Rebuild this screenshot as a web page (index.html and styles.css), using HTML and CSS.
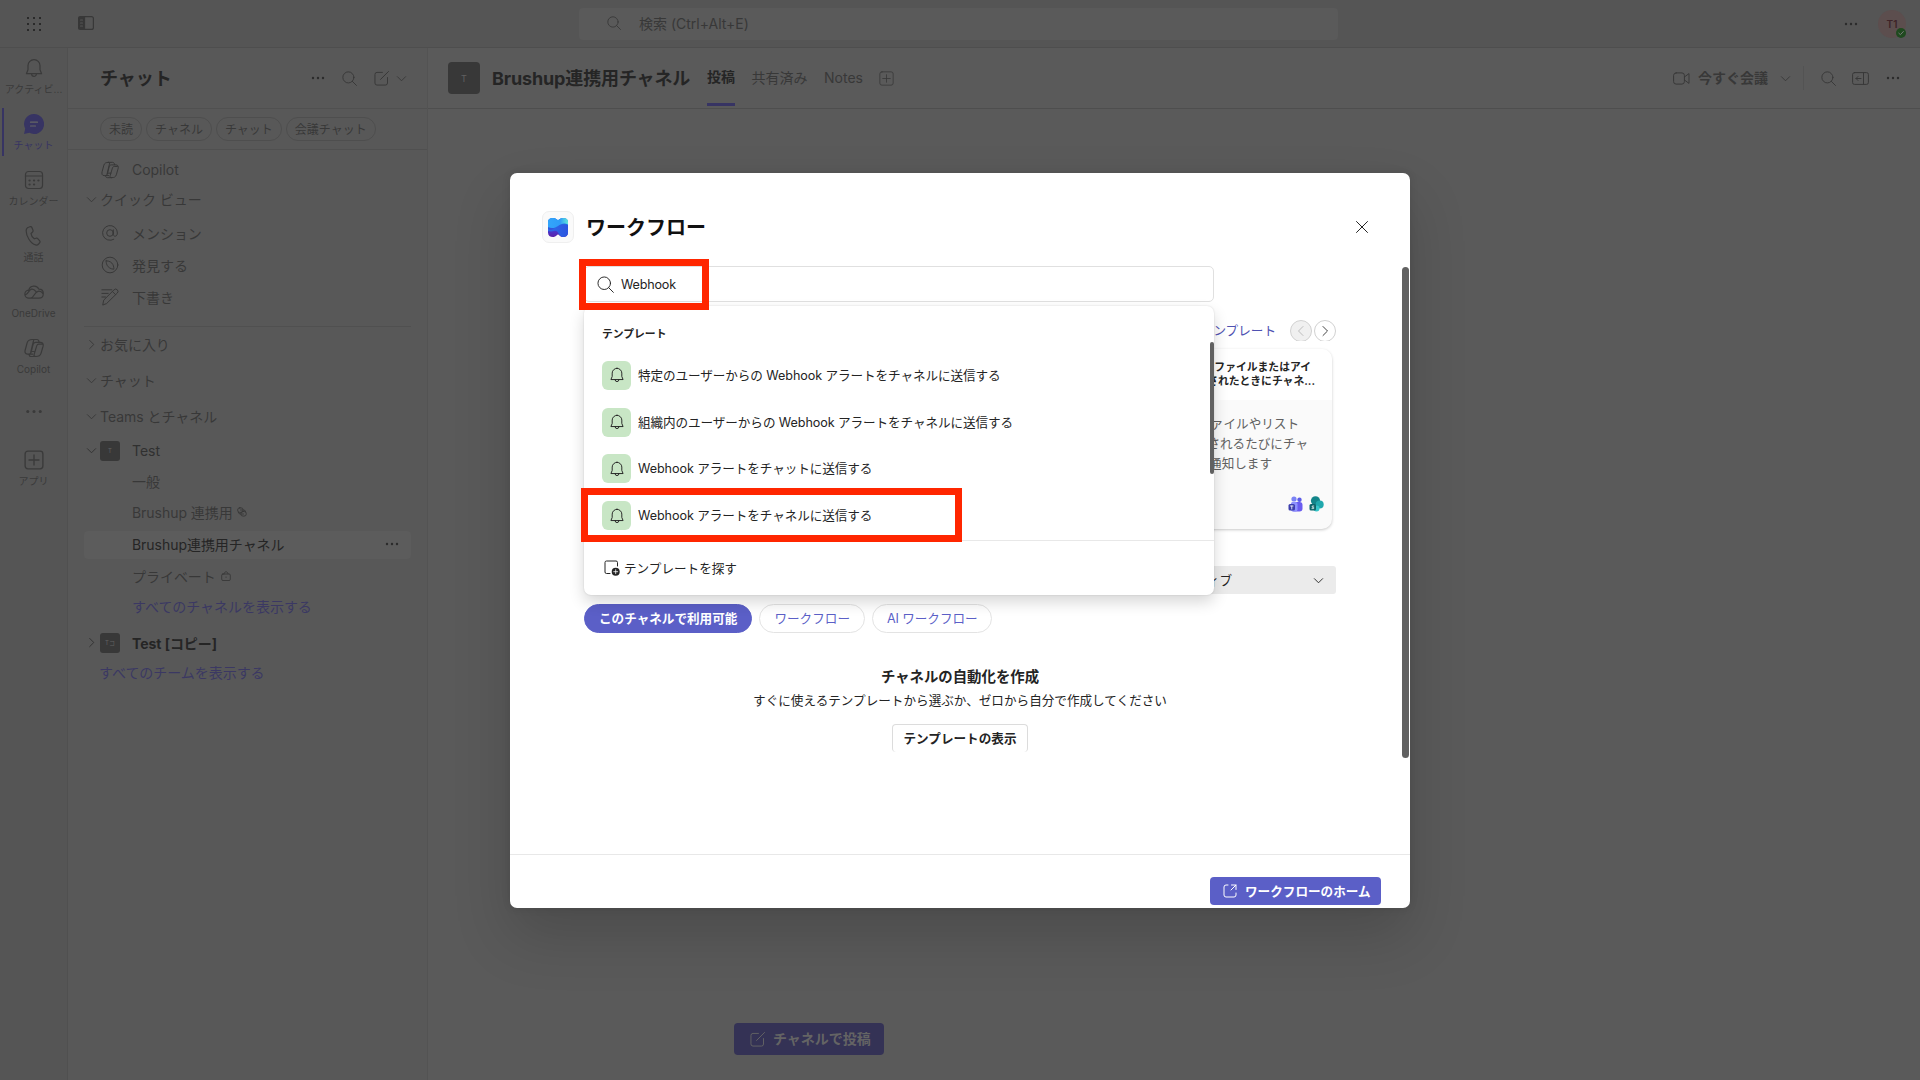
FILE: index.html
```
<!DOCTYPE html>
<html lang="ja">
<head>
    <meta charset="UTF-8">
    <meta name="viewport" content="width=device-width, initial-scale=1.0">
    <title>Brushup連携用チャネル | ワークフロー</title>
    <link rel="stylesheet" href="styles.css">
</head>
<body>
    <!-- 共通アイコン -->
    <svg class="sprite">
        <symbol id="bell" viewBox="0 0 20 20"><path d="M10 1.6a6 6 0 0 0-6 6v4.2L2.4 15.7h15.2L16 11.8V7.6a6 6 0 0 0-6-6zM7.6 15.9a2.4 2.4 0 0 0 4.8 0"/></symbol>
        <symbol id="search" viewBox="0 0 16 16"><circle cx="6.8" cy="6.8" r="5.9"/><path d="M11 11l4.400 4.400"/></symbol>
        <symbol id="down" viewBox="0 0 12 12"><path d="M1.5 4L6 8.5 10.5 4"/></symbol>
        <symbol id="right" viewBox="0 0 12 12"><path d="M4 1.5L8.5 6 4 10.5"/></symbol>
        <symbol id="dots" viewBox="0 0 14 4"><g fill="currentColor" stroke="none"><circle cx="2" cy="2" r="1.2"/><circle cx="7" cy="2" r="1.2"/><circle cx="12" cy="2" r="1.2"/></g></symbol>
        <symbol id="compose" viewBox="0 0 16 16"><path d="M9 1.5H3.2A2.2 2.2 0 0 0 1 3.700v9A2.200 2.200 0 0 0 3.200 15h9a2.200 2.200 0 0 0 2.200-2.200V7M7 9l8.500-8.500"/></symbol>
        <symbol id="copilot" viewBox="0 0 20 20"><path d="M8.200 1.500H13c1.300 0 1.800 1 2.200 2.800H11.500C10 4.300 9.500 5 9 6.700L7 14.500c-.4 1.300-1 1.700-2 1.700H3.500C1 16.200.7 14 1.200 12L3.200 4.600C3.900 2.300 5.500 1.500 8.200 1.500zM11.800 18.500H7c-1.300 0-1.800-1-2.200-2.300h3.700M15.200 4.300h1.500c2.500 0 2.800 2.200 2.300 4.200l-2 6.900c-.7 2.300-2.300 3.100-5.200 3.100-1.500 0-2-.8-1.700-2l2.600-8.700c.4-1.300 1-1.700 2-1.700h3.500M9.700 2l-3 12.500M8 13.500h3"/></symbol>
        <symbol id="plusbox" viewBox="0 0 18 18"><rect x="1" y="1" width="16" height="16" rx="2.500"/><path d="M9 4.500v9M4.500 9h9"/></symbol>
    </svg>

    <div class="app">
        <header class="topbar">
            <svg class="waffle" viewBox="0 0 16 16"><path d="M1 2h14M1 8h14M1 14h14"/></svg>
            <svg class="panel-icon" viewBox="0 0 16 14"><rect x=".6" y=".6" width="14.800" height="12.800" rx="2"/><path d="M1 1h5.500v12H1z" fill="currentColor"/><path d="M2.500 4h2M2.500 7h2M2.500 10h2" stroke="#555"/></svg>
            <div class="global-search">
                <svg class="icon"><use href="#search"/></svg>
                <span>検索 (Ctrl+Alt+E)</span>
            </div>
            <div class="account">
                <svg class="dots"><use href="#dots"/></svg>
                <div class="avatar">T1
                    <svg class="presence" viewBox="0 0 10 10"><circle cx="5" cy="5" r="5"/><path d="M2.800 5.200l1.600 1.500 3-3.200"/></svg>
                </div>
            </div>
        </header>

        <div class="workspace">
            <nav class="rail">
                <a class="rail-item"><svg><use href="#bell"/></svg><span>アクティビ...</span></a>
                <a class="rail-item active"><svg viewBox="0 0 20 20"><path d="M10 0a10 10 0 1 1-4.700 18.800L0 20l1.200-5.300A10 10 0 0 1 10 0z" fill="currentColor" stroke="none"/><path d="M6.500 8.200h7M6.500 12h5" stroke="#666"/></svg><span>チャット</span></a>
                <a class="rail-item"><svg viewBox="0 0 20 20"><rect x="1.500" y="1.500" width="17" height="17" rx="3"/><path d="M1.500 6h17"/><path d="M5.500 10.500h.1M10 10.500h.1M14.400 10.500h.1M5.500 14.500h.1M10 14.500h.1" stroke-width="2.200"/></svg><span>カレンダー</span></a>
                <a class="rail-item"><svg viewBox="0 0 20 20"><path d="M4.500 1.200L6 .7c1-.2 1.700.2 2 1l1 2.500c.3 1 0 1.500-.6 2L7 7.500c.2 1.800 1.700 4.300 3.300 5.300l1.800-.6c.8-.2 1.400 0 1.900.6l1.700 2c.5.7.4 1.500-.1 2l-1 1.200c-.8.900-1.900 1.300-3 .9C6.500 17.500 2 10 2.200 4.500c0-1.600 1-2.900 2.300-3.300z"/></svg><span>通話</span></a>
                <a class="rail-item"><svg viewBox="0 0 20 20"><path d="M5 16.200a4 4 0 0 1-.3-8A5.500 5.500 0 0 1 15 7.200c6 .2 5.500 9 0 9zM1.600 12.800c3-1 3-5 6-5.700 2-.4 3 .7 4.500 2.600M6.500 16c4 0 3.500-6 7.500-6.700 2.300-.4 4 .8 5 2.500"/></svg><span>OneDrive</span></a>
                <a class="rail-item"><svg><use href="#copilot"/></svg><span>Copilot</span></a>
                <a class="rail-item more"><svg viewBox="0 0 14 4"><use href="#dots"/></svg></a>
                <a class="rail-item"><svg viewBox="0 0 18 18"><use href="#plusbox"/></svg><span>アプリ</span></a>
            </nav>

            <aside class="sidebar">
                <div class="sidebar-head">
                    <h2>チャット</h2>
                    <svg class="dots"><use href="#dots"/></svg>
                    <svg class="icon search"><use href="#search"/></svg>
                    <svg class="icon compose"><use href="#compose"/></svg>
                    <svg class="chevron"><use href="#down"/></svg>
                </div>
                <div class="filters">
                    <span>未読</span><span>チャネル</span><span>チャット</span><span>会議チャット</span>
                </div>
                <div class="tree">
                    <div class="row copilot-row"><svg class="row-icon"><use href="#copilot"/></svg>Copilot</div>
                    <div class="row section quick"><svg class="chevron"><use href="#down"/></svg>クイック ビュー</div>
                    <div class="row"><svg class="row-icon" viewBox="0 0 20 20"><circle cx="10" cy="10" r="3.700"/><path d="M13.700 6.500v5c0 3 4.500 3 4.500-1.500a8.200 8.200 0 1 0-4 7"/></svg>メンション</div>
                    <div class="row"><svg class="row-icon" viewBox="0 0 20 20"><circle cx="10" cy="10" r="8.700"/><path d="M5.800 5.300c3.500 0 6.400 2 7.400 4.200s1.200 4 1 5.200c-3.500-.3-6.200-2-7.400-4.400s-1-4-1-5z"/></svg>発見する</div>
                    <div class="row"><svg class="row-icon" viewBox="0 0 20 20"><path d="M1 2h11M1 6h7M1 10h4M2 18.500l1-5L14.500 2a2.500 2.500 0 0 1 3.600 3.600L6.500 17z M12.800 4l3.400 3.400"/></svg>下書き</div>
                    <hr>
                    <div class="row section"><svg class="chevron"><use href="#right"/></svg>お気に入り</div>
                    <div class="row section"><svg class="chevron"><use href="#down"/></svg>チャット</div>
                    <div class="row section"><svg class="chevron"><use href="#down"/></svg>Teams とチャネル</div>
                    <div class="row team"><svg class="chevron"><use href="#down"/></svg><i>T</i>Test</div>
                    <div class="row channel general">一般</div>
                    <div class="row channel">Brushup 連携用<svg class="tag" viewBox="0 0 10 10"><rect x=".6" y=".8" width="5.500" height="4.600" rx="2.200"/><rect x="3.800" y="4.500" width="5.500" height="4.600" rx="2.200"/><path d="M3.500 3h3.200a2 2 0 0 1 2 1.800M6.500 7H3.300a2 2 0 0 1-2-1.600"/></svg></div>
                    <div class="row channel selected">Brushup連携用チャネル<svg class="dots"><use href="#dots"/></svg></div>
                    <div class="row channel">プライベート<svg class="tag lock" viewBox="0 0 10 10"><rect x=".7" y="3" width="8.600" height="6.500" rx="1.200"/><path d="M3 3c0-3 4-3 4-.3M4.900 6.200h.3"/></svg></div>
                    <div class="row channel link">すべてのチャネルを表示する</div>
                    <div class="row team copy"><svg class="chevron"><use href="#right"/></svg><i>Tコ</i><b>Test [コピー]</b></div>
                    <div class="row link all-teams">すべてのチームを表示する</div>
                </div>
            </aside>

            <main class="channel-view">
                <div class="channel-head">
                    <div class="team-tile">T</div>
                    <h1>Brushup連携用チャネル</h1>
                    <div class="tabs">
                        <span class="tab current">投稿</span>
                        <span class="tab">共有済み</span>
                        <span class="tab">Notes</span>
                        <svg class="icon"><use href="#plusbox"/></svg>
                    </div>
                    <div class="channel-actions">
                        <svg class="camera" viewBox="0 0 17 13"><rect x=".6" y=".9" width="10.800" height="11.200" rx="2.500"/><path d="M11.400 5l4.600-3.400v9.800L11.400 8"/></svg>
                        <b>今すぐ会議</b>
                        <svg class="chevron"><use href="#down"/></svg>
                        <span class="bar"></span>
                        <svg class="icon find"><use href="#search"/></svg>
                        <svg class="camera" viewBox="0 0 17 13"><rect x=".6" y=".6" width="15.800" height="11.800" rx="1.800"/><path d="M11.500 1v11M9 6.500H4M6 4.500l-2 2 2 2"/></svg>
                        <svg class="dots"><use href="#dots"/></svg>
                    </div>
                </div>
                <div class="feed">
                    <button class="post"><svg class="icon"><use href="#compose"/></svg><span>チャネルで投稿</span></button>
                </div>
            </main>
        </div>
    </div>

    <div class="modal">
        <div class="modal-head">
            <div class="logo">
                <svg viewBox="0 0 20 19">
                    <defs>
                        <linearGradient id="g1" x1="0" y1="0" x2="0" y2="1"><stop offset=".45" stop-color="#1f6fe8"/><stop offset=".7" stop-color="#4a35c9"/><stop offset="1" stop-color="#5a20a8"/></linearGradient>
                        <linearGradient id="g2" x1="0" y1="0" x2="1" y2="0"><stop offset="0" stop-color="#33a5fb"/><stop offset=".6" stop-color="#2f9df8"/><stop offset="1" stop-color="#5fe8d8"/></linearGradient>
                        <linearGradient id="g3" x1="0" y1="0" x2="1" y2="0"><stop offset="0" stop-color="#2f6be8"/><stop offset="1" stop-color="#2a55e0"/></linearGradient>
                        <clipPath id="shape"><path d="M0 4.500C0 1 2 0 5 0s4 2 5 2 2-2 5-2 5 1 5 4.500v10c0 3-2 4.500-5 4.500s-4-2.500-5-2.500S8 19 5 19s-5-1.500-5-4.500z"/></clipPath>
                    </defs>
                    <g clip-path="url(#shape)">
                        <path d="M0 0h20v19H0z" fill="url(#g1)"/>
                        <path d="M0 11c5 2 6-1 9-3s7-2 11-1v12h-7c-3-3-3-7-7-6-2 .6-4 .6-6 0z" fill="url(#g3)"/>
                        <path d="M0 0h20v6.500c-4-2-7-.5-10 1.500s-6 3-10 1z" fill="url(#g2)"/>
                    </g>
                </svg>
            </div>
            <h2>ワークフロー</h2>
            <svg class="close" viewBox="0 0 12 12"><path d="M.5.5l11 11M11.500.5l-11 11"/></svg>
        </div>

        <div class="modal-body">
            <div class="search-box">
                <svg class="icon"><use href="#search"/></svg>
                <span>Webhook</span>

                <!-- 検索候補 -->
                <div class="suggest">
                    <h3>テンプレート</h3>
                    <div class="option"><i><svg><use href="#bell"/></svg></i><span>特定のユーザーからの Webhook アラートをチャネルに送信する</span></div>
                    <div class="option"><i><svg><use href="#bell"/></svg></i><span>組織内のユーザーからの Webhook アラートをチャネルに送信する</span></div>
                    <div class="option"><i><svg><use href="#bell"/></svg></i><span>Webhook アラートをチャットに送信する</span></div>
                    <div class="option"><i><svg><use href="#bell"/></svg></i><span>Webhook アラートをチャネルに送信する</span></div>
                    <div class="browse">
                        <svg viewBox="0 0 16 16"><path d="M13.500 6V2.500A1.500 1.500 0 0 0 12 1H2.500A1.500 1.500 0 0 0 1 2.500V12a1.500 1.500 0 0 0 1.500 1.500H6"/><circle cx="11.700" cy="11.700" r="4" fill="#242424" stroke="none"/><path d="M9.700 11.700h4M11.700 9.700v4" stroke="#fff" stroke-width=".8"/></svg>
                        <span>テンプレートを探す</span>
                    </div>
                    <span class="thumb"></span>
                    <div class="mark mark-option"></div>
                </div>
                <div class="mark mark-search"></div>
            </div>

            <div class="carousel-head">
                <span>ンプレート</span>
                <div class="pager">
                    <button class="off"><svg viewBox="0 0 12 12"><path d="M8 1.500L3.500 6 8 10.500"/></svg></button>
                    <button><svg><use href="#right"/></svg></button>
                </div>
            </div>
            <div class="card">
                <div class="card-title">
                    <p class="t1">ファイルまたはアイ</p>
                    <p class="t2">されたときにチャネ...</p>
                </div>
                <div class="card-text">
                    <p class="b1">ファイルやリスト</p>
                    <p class="b2">されるたびにチャ</p>
                    <p class="b3">通知します</p>
                </div>
                <div class="card-apps">
                    <svg viewBox="0 0 15 16"><circle cx="6" cy="3" r="2.600" fill="#7b83f5"/><circle cx="11.500" cy="3.800" r="2.200" fill="#5b5be8"/><rect x="3" y="6" width="11.500" height="9.500" rx="3" fill="#6a5cf0"/><rect x="3" y="6" width="6.500" height="9.500" rx="2" fill="#8f92ff"/><rect x=".5" y="8" width="6.500" height="6.500" rx="1.500" fill="#3d3fae"/><path d="M2.500 10h2.500M3.750 10v3" stroke="#fff" stroke-width=".8"/></svg>
                    <svg viewBox="0 0 15 16"><circle cx="6.500" cy="4.800" r="4.600" fill="#12858a"/><circle cx="10.700" cy="8.500" r="4" fill="#20a8ad"/><circle cx="7.500" cy="12.500" r="3" fill="#35c5c9"/><rect x=".5" y="8" width="6.500" height="6.500" rx="1.500" fill="#0b6468"/><path d="M4.800 10H3.200v1.300h1.500v1.300H2.900" stroke="#fff" stroke-width=".7" fill="none"/></svg>
                </div>
            </div>
            <div class="select"><span>ィブ</span><svg class="chevron"><use href="#down"/></svg></div>

            <div class="pills">
                <span class="on">このチャネルで利用可能</span>
                <span>ワークフロー</span>
                <span>AI ワークフロー</span>
            </div>
            <div class="empty">
                <h3>チャネルの自動化を作成</h3>
                <p>すぐに使えるテンプレートから選ぶか、ゼロから自分で作成してください</p>
                <button>テンプレートの表示</button>
            </div>
            <span class="scrollbar"></span>
        </div>

        <div class="modal-foot">
            <button>
                <svg viewBox="0 0 14 14"><path d="M5 1H3a2 2 0 0 0-2 2v8a2 2 0 0 0 2 2h8a2 2 0 0 0 2-2V9M8.500 1H13v4.500M13 1L8 6"/></svg>
                <span>ワークフローのホーム</span>
            </button>
        </div>
    </div>
</body>
</html>
```
FILE: styles.css
```
* {
    box-sizing: border-box;
}

body {
    margin: 0;
    width: 1920px;
    height: 1080px;
    overflow: hidden;
    font-family: Inter, "Noto Sans CJK JP", sans-serif;
    font-size: 14px;
    color: #383838;
    background: #5a5a5a;
}

h1, h2, h3, p {
    margin: 0;
}

svg {
    display: block;
    flex: none;
    fill: none;
    stroke: currentColor;
    stroke-linecap: round;
    stroke-linejoin: round;
}

button {
    font-family: inherit;
    padding: 0;
    cursor: pointer;
}

.sprite {
    position: absolute;
    width: 0;
    height: 0;
}

.icon {
    width: 15px;
    height: 15px;
}

.chevron {
    width: 11px;
    height: 11px;
}

.dots {
    width: 14px;
    height: 4px;
    color: #2c2c2c;
}

/* 背景のアプリ */
.app {
    display: flex;
    flex-direction: column;
    height: 1080px;
}

.topbar {
    display: flex;
    align-items: center;
    height: 48px;
    padding: 0 14px 0 26px;
    background: #555;
    border-bottom: 1px solid #4e4e4e;
}

.waffle {
    width: 16px;
    height: 16px;
    color: #2a2a2a;
    stroke-width: 2;
    stroke-linecap: butt;
    stroke-dasharray: 2 4;
}

.panel-icon {
    width: 16px;
    height: 14px;
    margin: 0 0 2px 36px;
    stroke-width: 1.2;
}

.global-search {
    display: flex;
    align-items: center;
    width: 759px;
    height: 32px;
    margin-left: 485px;
    padding: 0 0 1px 28px;
    gap: 18px;
    background: #5a5a5a;
    border-radius: 4px;
}

.global-search .icon {
    width: 14px;
    height: 14px;
}

.account {
    display: flex;
    align-items: center;
    gap: 20px;
    margin-left: auto;
}

.avatar {
    position: relative;
    width: 28px;
    height: 28px;
    border-radius: 50%;
    background: #5c4e4e;
    color: #3d2327;
    font-size: 10px;
    font-weight: 600;
    line-height: 28px;
    text-align: center;
}

.presence {
    position: absolute;
    right: 0;
    bottom: 0;
    width: 10px;
    height: 10px;
    fill: #1f4a1f;
    stroke: none;
}

.presence path {
    fill: none;
    stroke: #777;
}

.workspace {
    display: flex;
    flex: 1;
}

.rail {
    width: 68px;
    background: #555;
    border-right: 1px solid #505050;
}

.rail-item {
    display: flex;
    flex-direction: column;
    align-items: center;
    height: 56px;
    padding-top: 10px;
    font-size: 10px;
    color: #3a3a3a;
}

.rail-item svg {
    width: 20px;
    height: 20px;
    stroke-width: 1.2;
}

.rail-item span {
    line-height: 14px;
    margin-top: 4px;
    white-space: nowrap;
}

.rail-item.active {
    color: #373463;
    background: linear-gradient(#373463, #373463) 2px 4px / 2px 48px no-repeat;
}

.rail-item.more {
    padding-top: 25px;
}

.rail-item.more svg {
    width: 18px;
    height: 5px;
}

.sidebar {
    width: 360px;
    background: #585858;
    border-right: 1px solid #535353;
}

.sidebar-head {
    display: flex;
    align-items: center;
    height: 61px;
    padding: 0 20px 0 32px;
    border-bottom: 1px solid #505050;
}

.sidebar-head h2 {
    flex: 1;
    padding-bottom: 2px;
    font-size: 18px;
    color: #252525;
}

.sidebar-head .search {
    margin-left: 17px;
}

.sidebar-head .compose {
    margin: 0 7px 0 17px;
}

.filters {
    display: flex;
    align-items: center;
    gap: 4px;
    height: 41px;
    padding-left: 32px;
    border-bottom: 1px solid #505050;
}

.filters span {
    height: 24px;
    padding: 0 8px;
    border: 1px solid #4e4e4e;
    border-radius: 12px;
    font-size: 12px;
    line-height: 23px;
}

.row {
    display: flex;
    align-items: center;
    height: 32px;
    padding: 0 0 1px 32px;
    letter-spacing: -.04px;
    white-space: nowrap;
}

.row-icon {
    width: 18px;
    height: 18px;
    margin: 0 13px 0 1px;
    stroke-width: 1.1;
}

.row .chevron {
    margin-right: 3px;
}

.copilot-row {
    height: 40px;
}

.section {
    height: 36px;
    padding: 0 0 2px 18px;
}

.quick {
    height: 20px;
    margin-bottom: 7px;
}

.tree hr {
    height: 1px;
    margin: 13px 16px 0;
    border: 0;
    background: #505050;
}

.team {
    padding-left: 18px;
    color: #303030;
}

.team i {
    width: 20px;
    height: 20px;
    margin: 0 12px 0 0;
    border-radius: 3px;
    background: #383838;
    color: #626262;
    font-size: 6px;
    font-style: normal;
    line-height: 20px;
    text-align: center;
}

.team b {
    color: #252525;
}

.channel {
    padding: 0 0 2px 64px;
}

.general {
    height: 30px;
    padding-bottom: 3px;
}

.selected {
    height: 28px;
    margin: 2px 16px;
    padding: 0 12px 2px 48px;
    justify-content: space-between;
    background: #5c5c5c;
    border-radius: 4px;
    color: #252525;
}

.tag {
    width: 10px;
    height: 10px;
    margin-left: 4px;
    stroke-width: .9;
}

.tag.lock {
    margin-left: 5px;
}

.link {
    height: 28px;
    color: #3b3863;
}

.copy {
    height: 44px;
}

.all-teams {
    height: 16px;
    padding: 0 0 2px 31px;
}

.channel-view {
    flex: 1;
}

.channel-head {
    display: flex;
    align-items: center;
    height: 61px;
    padding: 0 20px;
    border-bottom: 1px solid #4e4e4e;
}

.team-tile {
    width: 32px;
    height: 32px;
    border-radius: 4px;
    background: #383838;
    color: #606060;
    font-size: 9px;
    line-height: 34px;
    text-align: center;
}

.channel-head h1 {
    width: 215px;
    margin-left: 12px;
    padding-bottom: 2px;
    font-size: 18px;
    letter-spacing: -.14px;
    color: #252525;
    white-space: nowrap;
}

.tabs {
    display: flex;
    align-items: center;
    gap: 16.5px;
    height: 60px;
}

.tab {
    line-height: 58px;
}

.tab.current {
    height: 60px;
    font-weight: 700;
    color: #252525;
    background: linear-gradient(#373463, #373463) 0 55px / 28px 3px no-repeat;
}

.channel-actions {
    display: flex;
    align-items: center;
    margin-left: auto;
}

.channel-actions b {
    margin: 0 12px 0 8px;
    padding-bottom: 2px;
}

.camera {
    width: 17px;
    height: 13px;
}

.bar {
    width: 1px;
    height: 24px;
    margin: 0 17px 0 12px;
    background: #535353;
}

.channel-actions .find {
    margin-right: 16px;
}

.channel-actions .dots {
    margin-left: 17px;
}

.feed {
    padding: 914px 0 0 306px;
}

.post {
    display: flex;
    align-items: center;
    gap: 8px;
    width: 150px;
    height: 32px;
    padding-left: 16px;
    border: 0;
    border-radius: 4px;
    background: #343255;
    color: #646464;
    font-size: 14px;
    font-weight: 600;
    white-space: nowrap;
}

.post span {
    padding-bottom: 2px;
}

/* ワークフローのダイアログ */
.modal {
    position: absolute;
    top: 173px;
    left: 510px;
    display: flex;
    flex-direction: column;
    width: 900px;
    height: 735px;
    background: #fff;
    border-radius: 7px;
    box-shadow: 0 28px 58px rgba(0, 0, 0, .16), 0 0 8px rgba(0, 0, 0, .1);
    color: #242424;
    font-size: 12.6px;
}

.modal-head {
    display: flex;
    align-items: center;
    height: 93px;
    padding: 15px 42px 0 32px;
}

.logo {
    display: flex;
    align-items: center;
    justify-content: center;
    width: 32px;
    height: 32px;
    border: 1px solid #efefef;
    border-radius: 7px;
    background: #fafafa;
}

.logo svg {
    width: 20px;
    height: 19px;
    stroke: none;
}

.modal-head h2 {
    flex: 1;
    margin-left: 12px;
    padding-bottom: 2px;
    font-size: 20px;
    color: #111;
}

.close {
    width: 12px;
    height: 12px;
}

.modal-body {
    position: relative;
    height: 588px;
    padding: 0 74px;
}

.search-box {
    position: relative;
    display: flex;
    align-items: center;
    gap: 7px;
    width: 630px;
    height: 36px;
    padding-left: 12px;
    border: 1px solid #e0e0e0;
    border-radius: 5px;
}

.search-box > .icon {
    width: 17px;
    height: 17px;
    stroke-width: .9;
}

.search-box > span {
    letter-spacing: -.2px;
}

.mark {
    position: absolute;
    border: 7px solid #ff2600;
}

.mark-search {
    top: -8px;
    left: -6px;
    width: 130px;
    height: 51px;
}

.mark-option {
    top: 182px;
    left: -3px;
    width: 381px;
    height: 54px;
}

.suggest {
    position: absolute;
    top: 39px;
    left: -1px;
    width: 630px;
    height: 289px;
    background: #fff;
    border-radius: 7px;
    box-shadow: 0 7px 15px rgba(0, 0, 0, .16), 0 0 2px rgba(0, 0, 0, .14);
}

.suggest h3 {
    height: 46px;
    padding: 0 18px;
    font-size: 10.8px;
    line-height: 58px;
}

.option {
    display: flex;
    align-items: center;
    gap: 7px;
    height: 46.8px;
    padding-left: 18px;
    letter-spacing: -.08px;
}

.option span,
.browse span {
    padding-bottom: 2px;
}

.option i {
    display: flex;
    align-items: center;
    justify-content: center;
    width: 29px;
    height: 29px;
    border-radius: 6px;
    background: #c8e6c5;
}

.option svg {
    width: 16px;
    height: 16px;
    stroke-width: 1.2;
}

.browse {
    display: flex;
    align-items: center;
    gap: 4px;
    height: 55px;
    margin-top: 1px;
    padding-left: 20px;
    border-top: 1px solid #e8e8e8;
}

.browse svg {
    width: 16px;
    height: 16px;
}

.thumb {
    position: absolute;
    top: 36px;
    right: 0;
    width: 4px;
    height: 132px;
    border-radius: 2px;
    background: #616161;
}

.carousel-head {
    display: flex;
    justify-content: flex-end;
    align-items: center;
    gap: 14px;
    height: 22px;
    margin-top: 17px;
    color: #4f52b2;
}

.carousel-head > span {
    padding-bottom: 1px;
}

.pager {
    display: flex;
    gap: 2px;
    height: 21px;
    overflow: hidden;
}

.pager button {
    display: flex;
    align-items: center;
    justify-content: center;
    width: 22px;
    height: 22px;
    border: 1px solid #d1d1d1;
    border-radius: 50%;
    background: #fff;
    color: #424242;
}

.pager .off {
    background: #f0f0f0;
    color: #bdbdbd;
}

.pager svg {
    width: 12px;
    height: 12px;
}

.card {
    width: 190px;
    height: 180px;
    margin: 8px 4px 0 auto;
    overflow: hidden;
    background: #fafafa;
    border-radius: 10px;
    box-shadow: 0 1px 3px rgba(0, 0, 0, .22);
    text-align: right;
    white-space: nowrap;
}

.card-title {
    height: 51px;
    padding-top: 12px;
    background: #fff;
    font-size: 10.8px;
    font-weight: 700;
    line-height: 14px;
}

.card-text {
    padding-top: 14px;
    line-height: 19.8px;
    color: #616161;
}

.t1 { padding-right: 21px; }
.t2 { padding-right: 17px; }
.b1 { padding-right: 33px; }
.b2 { padding-right: 24px; }
.b3 { padding-right: 60px; }

.card-apps {
    display: flex;
    justify-content: flex-end;
    gap: 6px;
    padding: 23px 8px 0 0;
}

.card-apps svg {
    width: 15px;
    height: 16px;
    stroke: none;
}

.select {
    display: flex;
    align-items: center;
    justify-content: flex-end;
    gap: 81px;
    width: 200px;
    height: 28px;
    margin: 37px 0 0 auto;
    padding-right: 12px;
    border-radius: 3px;
    background: #ebebeb;
}

.select span {
    padding-bottom: 2px;
}

.pills {
    display: flex;
    gap: 7px;
    margin-top: 10px;
}

.pills span {
    height: 29px;
    padding: 0 14px;
    border: 1px solid #e3e3e3;
    border-radius: 15px;
    line-height: 27px;
    color: #5b5fc7;
}

.pills span:last-child {
    letter-spacing: -.08px;
}

.pills .on {
    border-color: #5b5fc7;
    background: #5b5fc7;
    color: #fff;
    font-weight: 600;
}

.empty {
    display: flex;
    flex-direction: column;
    align-items: center;
    margin-top: 34px;
}

.empty h3 {
    font-size: 14.4px;
    line-height: 20px;
}

.empty p {
    margin-top: 5px;
    line-height: 18px;
}

/* 下端はスクロール領域で切れる */
.empty button {
    width: 136px;
    height: 28px;
    margin-top: 14px;
    padding-bottom: 3px;
    border: 1px solid #dcdcdc;
    border-bottom: 0;
    border-radius: 4px;
    background: #fff;
    color: #242424;
    font-size: 12.6px;
    font-weight: 600;
}

.scrollbar {
    position: absolute;
    top: 1px;
    right: 1px;
    width: 7px;
    height: 491px;
    border-radius: 4px;
    background: #616161;
}

.modal-foot {
    display: flex;
    justify-content: flex-end;
    height: 54px;
    padding: 22px 29px 0 0;
    border-top: 1px solid #e8e8e8;
}

.modal-foot button {
    display: flex;
    align-items: center;
    gap: 8px;
    width: 171px;
    height: 28px;
    padding-left: 13px;
    border: 0;
    border-radius: 4px;
    background: #5b5fc7;
    color: #fff;
    font-size: 12.6px;
    font-weight: 600;
    white-space: nowrap;
}

.modal-foot span {
    padding-bottom: 2px;
}

.modal-foot svg {
    width: 14px;
    height: 14px;
}
```
